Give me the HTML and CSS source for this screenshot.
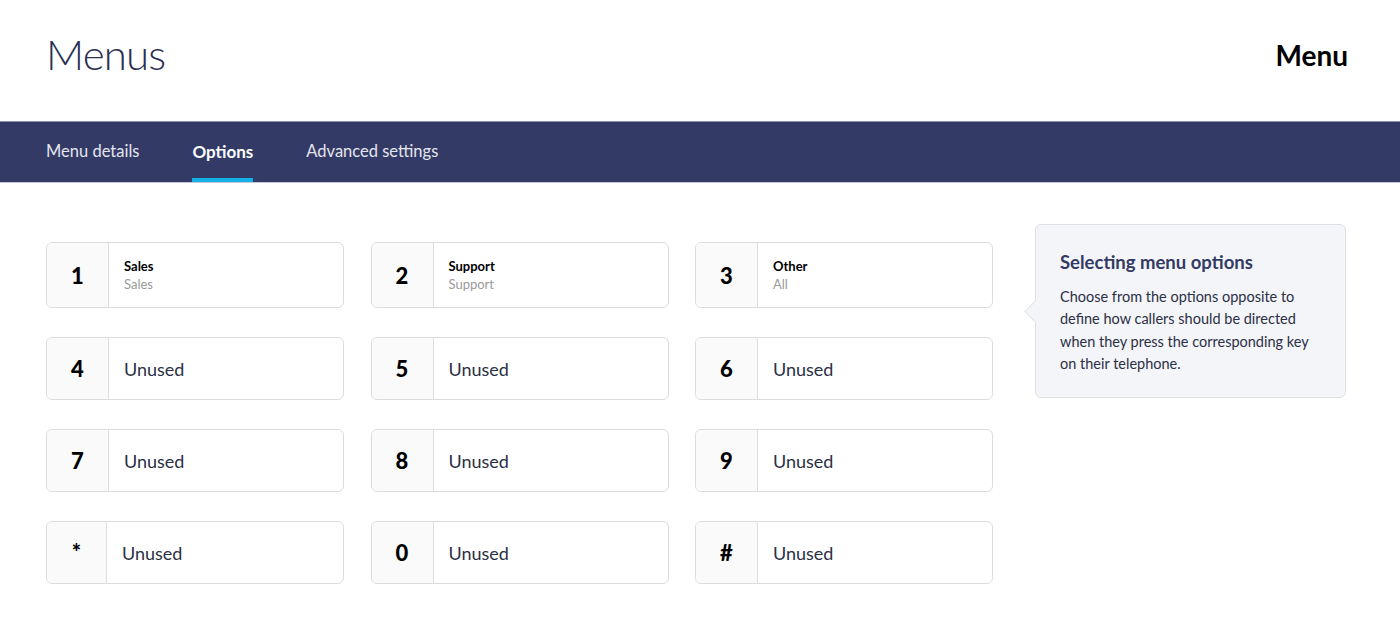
FILE: index.html
```html
<!DOCTYPE html>
<html lang="en">

<head>
    <meta charset="UTF-8" />
    <meta name="viewport" content="width=device-width, initial-scale=1.0" />
    <title>Menus</title>
    <link rel="stylesheet" href="styles.css">
</head>

<body>
    <header class="page-header">
        <h1>Menus</h1>
        <div class="page-name">Menu</div>
    </header>
    <nav class="tabs">
        <a class="tab">Menu details</a>
        <a class="tab active">Options</a>
        <a class="tab">Advanced settings</a>
    </nav>
    <main class="content">
        <div class="keypad">
            <div class="option">
                <div class="key">1</div>
                <div class="label">
                    <div class="label-title">Sales</div>
                    <div class="label-sub">Sales</div>
                </div>
            </div>
            <div class="option">
                <div class="key">2</div>
                <div class="label">
                    <div class="label-title">Support</div>
                    <div class="label-sub">Support</div>
                </div>
            </div>
            <div class="option">
                <div class="key">3</div>
                <div class="label">
                    <div class="label-title">Other</div>
                    <div class="label-sub">All</div>
                </div>
            </div>
            <div class="option">
                <div class="key">4</div>
                <div class="label unused">Unused</div>
            </div>
            <div class="option">
                <div class="key">5</div>
                <div class="label unused">Unused</div>
            </div>
            <div class="option">
                <div class="key">6</div>
                <div class="label unused">Unused</div>
            </div>
            <div class="option">
                <div class="key">7</div>
                <div class="label unused">Unused</div>
            </div>
            <div class="option">
                <div class="key">8</div>
                <div class="label unused">Unused</div>
            </div>
            <div class="option">
                <div class="key">9</div>
                <div class="label unused">Unused</div>
            </div>
            <div class="option">
                <div class="key key-star">*</div>
                <div class="label unused">Unused</div>
            </div>
            <div class="option">
                <div class="key">0</div>
                <div class="label unused">Unused</div>
            </div>
            <div class="option">
                <div class="key">#</div>
                <div class="label unused">Unused</div>
            </div>
        </div>
        <aside class="help">
            <h2>Selecting menu options</h2>
            <p>Choose from the options opposite to define how callers should be directed when they press the corresponding key on their telephone.</p>
        </aside>
    </main>
</body>

</html>
```

FILE: styles.css
```css
* {
    margin: 0;
    padding: 0;
    box-sizing: border-box;
}

body {
    font-family: "Lato", "Open Sans", sans-serif;
    background-color: #fff;
    color: #2b2f45;
    width: 1400px;
    height: 640px;
    overflow: hidden;
}

.page-header {
    display: flex;
    justify-content: space-between;
    align-items: center;
    height: 121px;
    padding: 0 52px 14px 46px;
}

.page-header h1 {
    font-size: 42px;
    font-weight: 300;
    color: #2b2f55;
    letter-spacing: -0.8px;
}

.page-name {
    font-size: 28px;
    font-weight: 700;
    color: #000;
    margin-top: 2px;
}

.tabs {
    display: flex;
    gap: 53px;
    height: 62px;
    padding: 0 46px;
    background-color: #333a66;
    border-top: 1px solid #8a93ad;
    border-bottom: 1px solid #c4c9d8;
}

.tab {
    display: flex;
    align-items: center;
    font-size: 16.5px;
    color: #e4e6ee;
    padding-top: 2px;
    border-bottom: 4px solid transparent;
    cursor: pointer;
}

.tab.active {
    font-size: 17px;
    font-weight: 700;
    color: #fff;
    border-bottom-color: #14b1e7;
}

.content {
    display: flex;
    align-items: flex-start;
    padding: 41px 46px 0 46px;
    gap: 42px;
}

.keypad {
    display: grid;
    grid-template-columns: repeat(3, 298px);
    grid-auto-rows: 63px;
    grid-template-rows: 66px;
    column-gap: 26.5px;
    row-gap: 29px;
    margin-top: 18px;
}

.option {
    display: flex;
    border: 1px solid #dcdcdc;
    border-radius: 6px;
    overflow: hidden;
    background-color: #fff;
}

.key {
    display: flex;
    align-items: center;
    justify-content: center;
    width: 62px;
    flex-shrink: 0;
    background-color: #fafafa;
    border-right: 1px solid #dedede;
    font-size: 22px;
    font-weight: 900;
    color: #000;
}

.key-star {
    width: 60px;
    align-items: flex-start;
    padding-top: 16px;
}

.label {
    display: flex;
    flex-direction: column;
    justify-content: center;
    padding-left: 15px;
}

.label-title {
    font-size: 13px;
    font-weight: 700;
    color: #000;
    line-height: 18px;
}

.label-sub {
    font-size: 13px;
    color: #9a9a9a;
    line-height: 18px;
}

.unused {
    font-size: 18px;
    color: #2b2f45;
}

.help {
    position: relative;
    width: 311px;
    background-color: #f4f5f8;
    border: 1px solid #dde0e6;
    border-radius: 6px;
    padding: 26px 24px 22px 24px;
}

.help::before {
    content: "";
    position: absolute;
    left: -11px;
    top: 76px;
    width: 20px;
    height: 20px;
    background-color: #f4f5f8;
    border-left: 1px solid #dde0e6;
    border-bottom: 1px solid #dde0e6;
    transform: rotate(45deg) scale(0.75, 0.75);
}

.help h2 {
    font-size: 18.5px;
    font-weight: 700;
    color: #333a66;
    margin-bottom: 13px;
}

.help p {
    font-size: 14.5px;
    line-height: 22.3px;
    color: #2b2f45;
}
```
